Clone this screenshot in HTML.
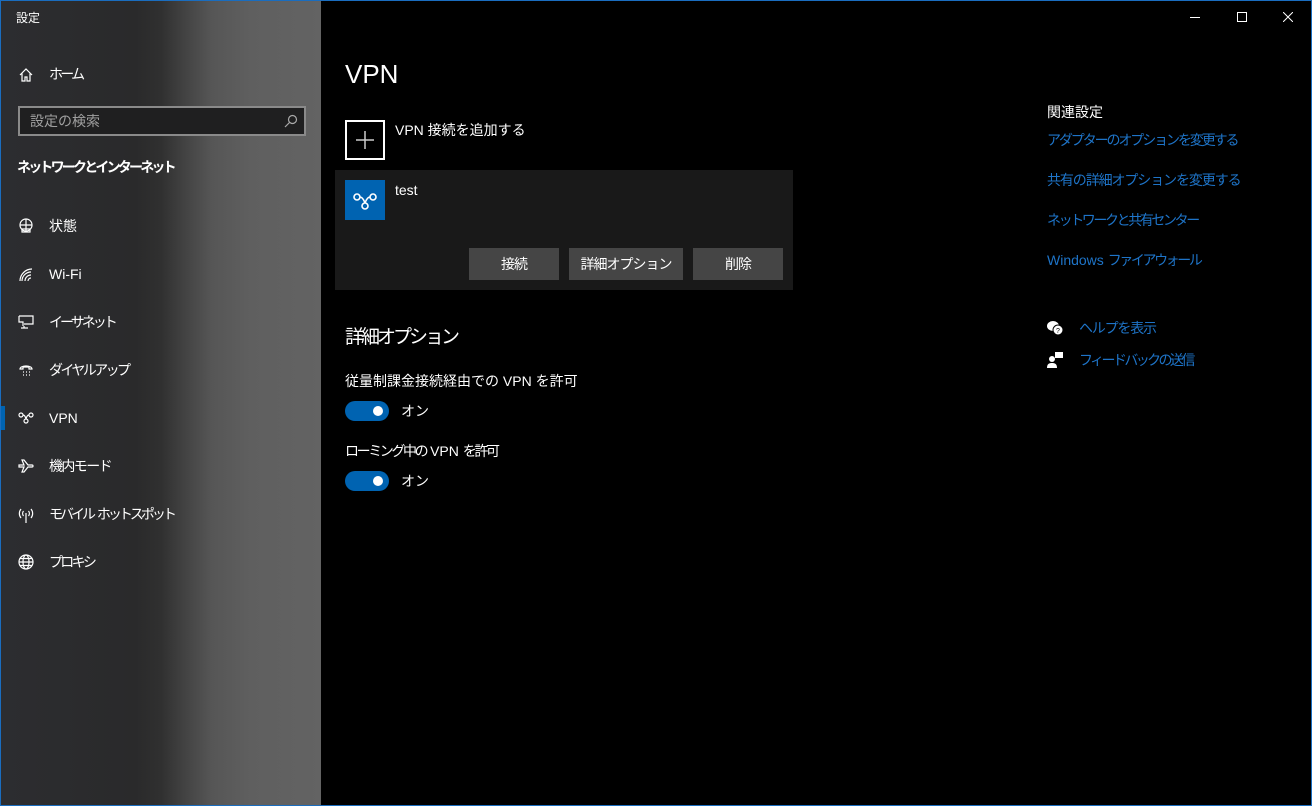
<!DOCTYPE html>
<html><head><meta charset="utf-8"><style>
*{margin:0;padding:0;box-sizing:border-box}
body{width:1312px;height:806px;background:#000;font-family:"Liberation Sans","Noto Sans CJK JP",sans-serif;color:#fff;position:relative;overflow:hidden}
.win{position:absolute;inset:0;border:1px solid #1a6dbf;z-index:5;pointer-events:none}
.side{position:absolute;left:1px;top:1px;width:320px;height:804px;background:linear-gradient(90deg,#2c2d30 0%,#2a2a2b 42%,#303030 50%,#444 58%,#565656 66%,#5f5f5f 78%,#636363 100%)}
.t{position:absolute;font-size:14px;white-space:nowrap;line-height:1}
.t b{font-weight:inherit;letter-spacing:0}
.ic{position:absolute;left:17px;width:16px;height:16px}
.search{position:absolute;left:17px;top:105px;width:288px;height:30px;border:2px solid #8a8a8a;background:#1f1f20}
.link{color:#1e74c8}
.btn{position:absolute;top:248px;height:32px;background:#454545;font-size:14px;text-align:center;line-height:32px;letter-spacing:-1px}
.tog{position:absolute;left:345px;width:44px;height:20px;border-radius:10px;background:#0063b1}
.tog::after{content:"";position:absolute;right:6px;top:5px;width:10px;height:10px;border-radius:50%;background:#fff}
</style></head><body>
<div class="win"></div>
<div class="side">
<div class="t" style="left:15px;top:11px;font-size:12px">設定</div>
<svg class="ic" style="top:66px" viewBox="0 0 16 16" fill="none" stroke="#fff" stroke-width="1.2"><path d="M2 8L8 2l6 6M4 6.5V14h3v-4h2v4h3V6.5"/></svg>
<div class="t" style="left:48px;top:66px;letter-spacing:-2.7px">ホーム</div>
<div class="search"><span class="t" style="left:10px;top:6px;color:#a0a0a0">設定の検索</span>
<svg style="position:absolute;right:6px;top:6px" width="14" height="14" viewBox="0 0 14 14" fill="none" stroke="#aaa" stroke-width="1.2"><circle cx="8.5" cy="5.5" r="4"/><path d="M5.5 8.5L1 13"/></svg></div>
<div class="t" style="left:16px;top:159px;font-weight:bold;letter-spacing:-2.8px">ネットワークとインターネット</div>
<svg class="ic" style="top:217px" viewBox="0 0 16 16" fill="none" stroke="#fff" stroke-width="1.2"><circle cx="8" cy="7" r="6"/><path d="M2 7h12M8 1v12M4 11h8v3H4z"/></svg>
<div class="t" style="left:48px;top:218px">状態</div>
<svg class="ic" style="top:266px" viewBox="0 0 16 16" fill="none" stroke="#fff" stroke-width="1.2"><path d="M2 14a12 12 0 0 1 12-12M4 14a9 9 0 0 1 9-9M7 14a6 6 0 0 1 6-6M10 14a3 3 0 0 1 3-3"/></svg>
<div class="t" style="left:48px;top:266px">Wi-Fi</div>
<svg class="ic" style="top:313px" viewBox="0 0 16 16" fill="none" stroke="#fff" stroke-width="1.2"><path d="M1 2h14v8H6M1 2v6h4v4M3 14h7M6 12v2"/></svg>
<div class="t" style="left:48px;top:314px;letter-spacing:-3px">イーサネット</div>
<svg class="ic" style="top:361px" viewBox="0 0 16 16" fill="none" stroke="#fff" stroke-width="1.2"><path d="M2 7c0-4 12-4 12 0H11V5H5v2z" /><path d="M5 10h1M8 10h1M11 10h1M5 13h1M8 13h1M11 13h1" stroke-dasharray="1 2"/></svg>
<div class="t" style="left:48px;top:362px;letter-spacing:-2.6px">ダイヤルアップ</div>
<div style="position:absolute;left:0;top:405px;width:4px;height:24px;background:#0063b1"></div>
<svg class="ic" style="top:410px" viewBox="0 0 16 16" fill="none" stroke="#fff" stroke-width="1.2"><circle cx="3" cy="4" r="2"/><circle cx="13" cy="4" r="2"/><circle cx="8" cy="10" r="2"/><path d="M5 4c2 0 3 4 3 4M11 4c-2 0-3 4-3 4"/></svg>
<div class="t" style="left:48px;top:410px">VPN</div>
<svg class="ic" style="top:457px" viewBox="0 0 16 16" fill="none" stroke="#fff" stroke-width="1.2"><path d="M1 7h5L4 2h2l4 5h4a1 1 0 0 1 0 2h-4l-4 5H4l2-5H1z"/></svg>
<div class="t" style="left:48px;top:458px;letter-spacing:-1.6px">機内モード</div>
<svg class="ic" style="top:506px" viewBox="0 0 16 16" fill="none" stroke="#fff" stroke-width="1.2"><path d="M8 6v10M3 2a7 7 0 0 0 0 9M13 2a7 7 0 0 1 0 9M5.5 4a4 4 0 0 0 0 5M10.5 4a4 4 0 0 1 0 5"/></svg>
<div class="t" style="left:48px;top:506px;letter-spacing:-3px">モバイル<b> </b>ホットスポット</div>
<svg class="ic" style="top:553px" viewBox="0 0 16 16" fill="none" stroke="#fff" stroke-width="1.2"><circle cx="8" cy="8" r="7"/><ellipse cx="8" cy="8" rx="3" ry="7"/><path d="M1 8h14M2 4.5h12M2 11.5h12"/></svg>
<div class="t" style="left:48px;top:554px;letter-spacing:-2.7px">プロキシ</div>
</div>
<svg style="position:absolute;left:1190px;top:17px" width="10" height="2"><rect width="10" height="1" fill="#fff"/></svg>
<svg style="position:absolute;left:1237px;top:12px" width="10" height="10"><rect x=".5" y=".5" width="9" height="9" fill="none" stroke="#fff"/></svg>
<svg style="position:absolute;left:1283px;top:12px" width="10" height="10"><path d="M0 0l10 10M10 0L0 10" stroke="#fff"/></svg>
<div class="t" style="left:345px;top:61px;font-size:26px">VPN</div>
<div style="position:absolute;left:345px;top:120px;width:40px;height:40px;border:2px solid #fff"></div>
<svg style="position:absolute;left:355px;top:130px" width="20" height="20"><path d="M10 1v18M1 10h18" stroke="#ccc" stroke-width="1.5"/></svg>
<div class="t" style="left:395px;top:123px">VPN 接続を追加する</div>
<div style="position:absolute;left:335px;top:170px;width:458px;height:120px;background:#191919"></div>
<div style="position:absolute;left:345px;top:180px;width:40px;height:40px;background:#0063b1"></div>
<svg style="position:absolute;left:351px;top:186px" width="28" height="28" viewBox="0 0 28 28" fill="none" stroke="#fff" stroke-width="1.6"><circle cx="6" cy="11" r="3"/><circle cx="22" cy="11" r="3"/><circle cx="14" cy="20" r="3"/><path d="M9 11c3 0 5 6 5 6M19 11c-3 0-5 6-5 6"/></svg>
<div class="t" style="left:395px;top:183px">test</div>
<div class="btn" style="left:469px;width:90px">接続</div>
<div class="btn" style="left:569px;width:114px">詳細オプション</div>
<div class="btn" style="left:693px;width:90px">削除</div>
<div class="t" style="left:345px;top:328px;font-size:19px;letter-spacing:-3px">詳細オプション</div>
<div class="t" style="left:345px;top:374px">従量制課金接続経由での VPN を許可</div>
<div class="tog" style="top:401px"></div>
<div class="t" style="left:401px;top:404px">オン</div>
<div class="t" style="left:345px;top:444px;letter-spacing:-2.4px">ローミング中の<b> VPN </b>を許可</div>
<div class="tog" style="top:471px"></div>
<div class="t" style="left:401px;top:474px">オン</div>
<div class="t" style="left:1047px;top:105px">関連設定</div>
<div class="t link" style="left:1047px;top:133px;letter-spacing:-2.1px">アダプターのオプションを変更する</div>
<div class="t link" style="left:1047px;top:173px;letter-spacing:-1.1px">共有の詳細オプションを変更する</div>
<div class="t link" style="left:1047px;top:213px;letter-spacing:-2.4px">ネットワークと共有センター</div>
<div class="t link" style="left:1047px;top:253px;letter-spacing:-2.4px"><b>Windows </b>ファイアウォール</div>
<svg style="position:absolute;left:1047px;top:320px" width="17" height="16" viewBox="0 0 17 16" fill="#fff"><ellipse cx="6" cy="6" rx="6" ry="5"/><circle cx="11" cy="10" r="5" stroke="#000" stroke-width="1"/><text x="9" y="13" font-size="7" fill="#000">?</text></svg>
<div class="t link" style="left:1079px;top:321px;letter-spacing:-1.2px">ヘルプを表示</div>
<svg style="position:absolute;left:1047px;top:352px" width="16" height="16" viewBox="0 0 16 16" fill="#fff"><circle cx="5" cy="7" r="3"/><path d="M0 16c0-4 2-5 5-5s5 1 5 5z"/><rect x="8" y="0" width="8" height="6"/></svg>
<div class="t link" style="left:1079px;top:353px;letter-spacing:-2.6px">フィードバックの送信</div>
</body></html>
